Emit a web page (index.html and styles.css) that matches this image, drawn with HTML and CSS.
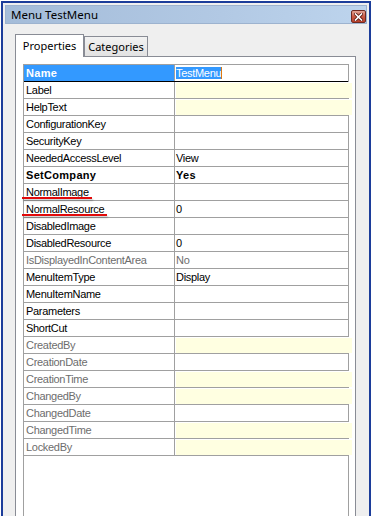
FILE: index.html
```html
<!DOCTYPE html>
<html lang="en">
<head>
    <meta charset="UTF-8">
    <title>Menu TestMenu</title>
    <link rel="stylesheet" href="styles.css">
</head>
<body>

<div class="window">
    <div class="titlebar">
        <span class="title">Menu TestMenu</span>
        <span class="close">
            <svg width="9" height="8" viewBox="0 0 9 8">
                <path d="M1.5 1 L7.5 7 M7.5 1 L1.5 7" stroke="#5a1a14" stroke-width="3.2" stroke-linecap="square"/>
                <path d="M1.5 1 L7.5 7 M7.5 1 L1.5 7" stroke="#fff" stroke-width="1.6" stroke-linecap="square"/>
            </svg>
        </span>
    </div>

    <div class="tabs">
        <div class="tab active">Properties</div>
        <div class="tab">Categories</div>
    </div>

    <div class="tab-page">
        <div class="grid">
            <div class="row selected">
                <div class="name">Name</div>
                <div class="value"><span class="sel">TestMenu</span><span class="caret"></span></div>
            </div>
            <div class="row"><div class="name">Label</div><div class="value edit"></div></div>
            <div class="row"><div class="name">HelpText</div><div class="value edit"></div></div>
            <div class="row"><div class="name">ConfigurationKey</div><div class="value"></div></div>
            <div class="row"><div class="name">SecurityKey</div><div class="value"></div></div>
            <div class="row"><div class="name">NeededAccessLevel</div><div class="value">View</div></div>
            <div class="row bold"><div class="name">SetCompany</div><div class="value">Yes</div></div>
            <div class="row"><div class="name"><span class="mark">NormalImage</span></div><div class="value"></div></div>
            <div class="row"><div class="name"><span class="mark">NormalResource</span></div><div class="value">0</div></div>
            <div class="row"><div class="name">DisabledImage</div><div class="value"></div></div>
            <div class="row"><div class="name">DisabledResource</div><div class="value">0</div></div>
            <div class="row off"><div class="name">IsDisplayedInContentArea</div><div class="value">No</div></div>
            <div class="row"><div class="name">MenuItemType</div><div class="value">Display</div></div>
            <div class="row"><div class="name">MenuItemName</div><div class="value"></div></div>
            <div class="row"><div class="name">Parameters</div><div class="value"></div></div>
            <div class="row"><div class="name">ShortCut</div><div class="value"></div></div>
            <div class="row off"><div class="name">CreatedBy</div><div class="value edit"></div></div>
            <div class="row off"><div class="name">CreationDate</div><div class="value"></div></div>
            <div class="row off"><div class="name">CreationTime</div><div class="value edit"></div></div>
            <div class="row off"><div class="name">ChangedBy</div><div class="value edit"></div></div>
            <div class="row off"><div class="name">ChangedDate</div><div class="value"></div></div>
            <div class="row off"><div class="name">ChangedTime</div><div class="value edit"></div></div>
            <div class="row off"><div class="name">LockedBy</div><div class="value edit"></div></div>
        </div>
    </div>
</div>

</body>
</html>
```

FILE: styles.css
```css
body {
    margin: 0;
    background-color: #ffffff;
    overflow: hidden;
    font-family: "Liberation Sans", Arial, sans-serif;
}

.window {
    margin: 1px 1px 0 1px;
    height: 520px;
    border: 2px solid #1c3d9a;
    border-bottom: none;
    background-color: #efefef;
    padding: 2px;
}

/* title bar */
.titlebar {
    height: 19px;
    box-sizing: border-box;
    border: 1px solid #9db3cf;
    background: linear-gradient(to right, #a4bcd9, #b2c9e4 60%, #bdd4ed);
    display: flex;
    align-items: center;
    justify-content: space-between;
    padding: 0 0 0 5px;
}

.title {
    font-family: "Noto Sans", sans-serif;
    font-size: 11.5px;
    color: #000;
}

.close {
    align-self: flex-end;
    margin-bottom: 0;
    width: 15px;
    height: 13px;
    box-sizing: border-box;
    border: 1px solid #6e2a22;
    border-radius: 2px;
    background: linear-gradient(#e3a597, #cc5a45 50%, #b8402c);
    display: flex;
    align-items: center;
    justify-content: center;
}

.close svg {
    display: block;
}

/* tabs */
.tabs {
    display: flex;
    align-items: flex-end;
    margin-top: 10px;
    padding-left: 10px;
    height: 22px;
}

.tab {
    box-sizing: border-box;
    height: 20px;
    border: 1px solid #898c95;
    border-bottom: none;
    background: linear-gradient(#f2f2f2, #e2e2e2);
    font-family: "Noto Sans", sans-serif;
    font-size: 11px;
    color: #000;
    text-align: center;
    line-height: 19px;
    width: 64px;
}

.tab.active {
    position: relative;
    z-index: 1;
    height: 23px;
    width: 69px;
    margin-bottom: -1px;
    background: #ffffff;
    line-height: 21px;
}

.tab-page {
    margin: 0 11px 0 10px;
    height: 480px;
    border: 1px solid #898c95;
    background-color: #ffffff;
    padding: 7px 6px 0 7px;
}

/* property grid */
.grid {
    height: 470px;
    border: 1px solid #a0a0a0;
    background-color: #ffffff;
}

.row {
    display: grid;
    grid-template-columns: 151px 177px;
    height: 17px;
    box-sizing: border-box;
    border-bottom: 1px solid #a0a0a0;
    font-size: 11px;
    letter-spacing: -0.3px;
    line-height: 16px;
    color: #000;
}

.name {
    border-right: 1px solid #a0a0a0;
    padding-left: 2px;
    white-space: nowrap;
}

.value {
    padding-left: 1px;
    white-space: nowrap;
}

.value.edit {
    background-color: #ffffe1;
    box-shadow: inset 1px 1px 0 #ffffff;
}

.row.selected {
    border-bottom-color: #000;
}

.row.selected .name {
    background-color: #3399ff;
    color: #ffffff;
    font-weight: bold;
    letter-spacing: 0.3px;
}

.sel {
    display: inline-block;
    margin-top: 2px;
    height: 12px;
    line-height: 12px;
    background-color: #3399ff;
    color: #ffffff;
    vertical-align: top;
}

.caret {
    display: inline-block;
    margin-top: 2px;
    width: 1px;
    height: 12px;
    background-color: #e07a10;
    vertical-align: top;
}

.row.bold {
    font-weight: bold;
    letter-spacing: 0.3px;
}

.row.off {
    color: #6d6d6d;
}

/* red hand-drawn underline marks */
.mark {
    position: relative;
}

.mark::after {
    content: "";
    position: absolute;
    left: -4px;
    right: -3px;
    bottom: -1px;
    height: 2px;
    background-color: #e10a0a;
    box-shadow: 1px 2px 2px rgba(0, 0, 0, 0.22);
}
```
